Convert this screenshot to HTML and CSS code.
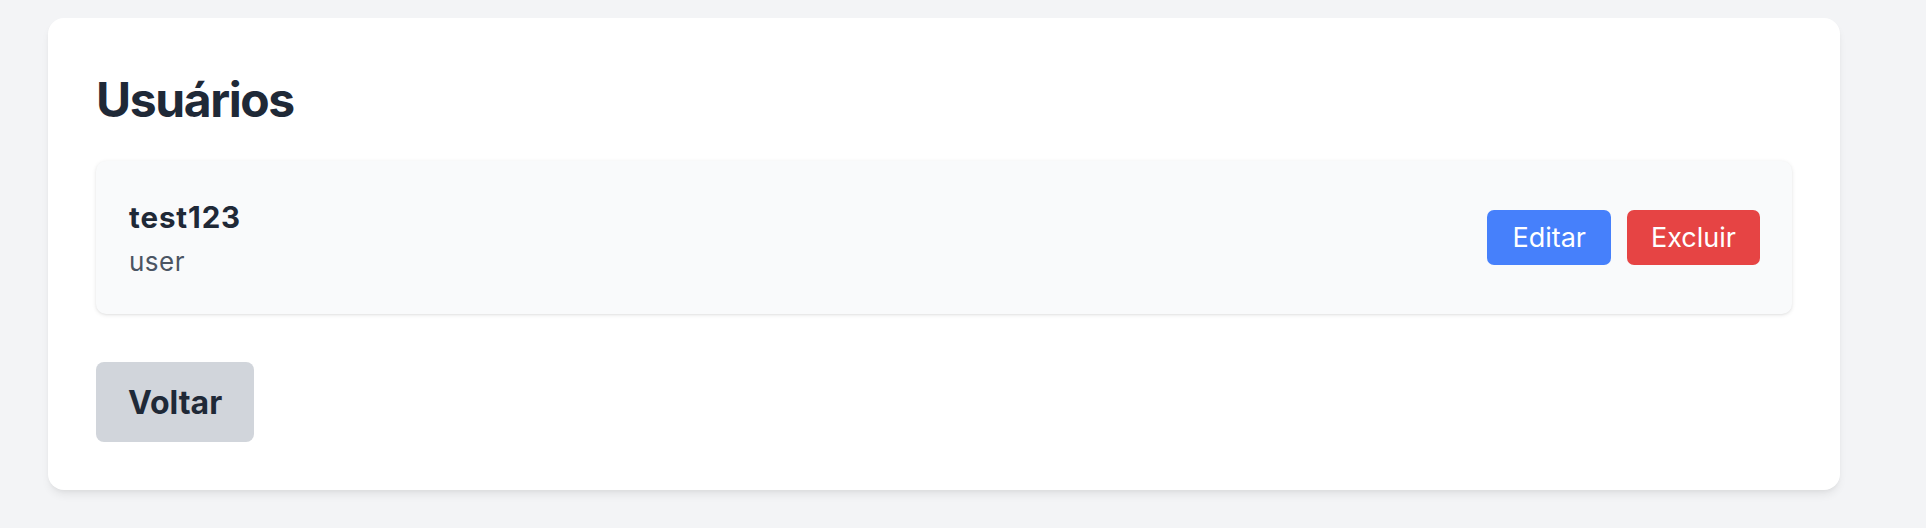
FILE: index.html
```html
<!DOCTYPE html>
<html lang="pt-BR">
<head>
<meta charset="utf-8">
<title>Usuários</title>
<link rel="stylesheet" href="styles.css">
</head>
<body>
<main class="card">
  <h1 class="title">Usuários</h1>
  <ul class="user-list">
    <li class="user-item">
      <div class="user-info">
        <div class="user-name">test123</div>
        <div class="user-role">user</div>
      </div>
      <div class="user-actions">
        <button class="btn btn-edit">Editar</button>
        <button class="btn btn-delete">Excluir</button>
      </div>
    </li>
  </ul>
  <button class="btn-back">Voltar</button>
</main>
</body>
</html>
```

FILE: styles.css
```css
* { box-sizing: border-box; }
html, body { margin: 0; padding: 0; }
body {
  background: #f3f4f6;
  font-family: Inter, "Noto Sans", sans-serif;
  padding-top: 18px;
  height: 528px;
  overflow: hidden;
}
.card {
  margin-left: 48px;
  width: 1792px;
  background: #ffffff;
  border-radius: 16px;
  box-shadow: 0 6px 10px -2px rgba(0,0,0,0.08), 0 2px 5px -2px rgba(0,0,0,0.06);
  padding: 48px;
}
.title {
  margin: 0 0 28px 0;
  font-size: 48px;
  line-height: 67px;
  font-weight: 700;
  letter-spacing: -1.4px;
  color: #1f2937;
}
.user-list {
  list-style: none;
  margin: 0;
  padding: 0;
}
.user-item {
  display: flex;
  align-items: center;
  justify-content: space-between;
  background: #f9fafb;
  border-radius: 10px;
  box-shadow: 0 1px 4px rgba(0,0,0,0.10), 0 1px 2px rgba(0,0,0,0.04);
  padding: 32px 32px 32px 33px;
  height: 153px;
}
.user-name {
  font-size: 29.5px;
  line-height: 46px;
  font-weight: 700;
  letter-spacing: 0.9px;
  color: #1f2937;
}
.user-role {
  font-size: 26px;
  line-height: 40px;
  padding-top: 2px;
  letter-spacing: 0.5px;
  color: #4b5563;
}
.user-actions {
  display: flex;
  gap: 16px;
}
.btn {
  border: 0;
  height: 55px;
  padding: 0 26px;
  border-radius: 7px;
  font-family: inherit;
  font-size: 27px;
  color: #ffffff;
}
.btn-edit { background: #4680fb; padding: 0 25px; }
.btn-delete { background: #e64444; padding: 0 24px; }
.btn-back {
  margin-top: 48px;
  border: 0;
  height: 80px;
  padding: 0 32px;
  border-radius: 8px;
  background: #d1d5db;
  color: #1f2937;
  font-family: inherit;
  font-size: 32px;
  font-weight: 700;
}
```
